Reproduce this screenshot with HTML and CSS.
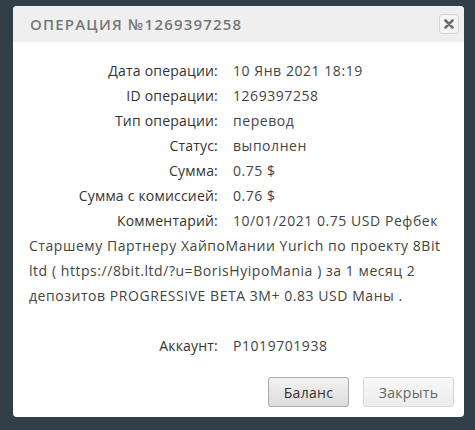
FILE: index.html
```html
<!DOCTYPE html>
<html lang="ru">
<head>
<meta charset="utf-8">
<link rel="stylesheet" href="styles.css">
</head>
<body>
<div class="dialog">
  <div class="header">
    <span class="title">Операция №1269397258</span>
    <button class="close" aria-label="close">
      <svg width="10" height="10" viewBox="0 0 10 10"><path d="M1.5 1.5 L8.5 8.5 M8.5 1.5 L1.5 8.5" stroke="#6e6e6e" stroke-width="2.6" stroke-linecap="round"/></svg>
    </button>
  </div>
  <div class="body">
    <p class="row"><span class="label">Дата операции:</span>10 Янв 2021 18:19</p>
    <p class="row"><span class="label">ID операции:</span>1269397258</p>
    <p class="row"><span class="label">Тип операции:</span>перевод</p>
    <p class="row"><span class="label">Статус:</span>выполнен</p>
    <p class="row"><span class="label">Сумма:</span>0.75 $</p>
    <p class="row"><span class="label">Сумма с комиссией:</span>0.76 $</p>
    <p class="row"><span class="label">Комментарий:</span>10/01/2021 0.75 USD Рефбек Старшему Партнеру ХайпоМании Yurich по проекту 8Bit ltd ( https://8bit.ltd/?u=BorisHyipoMania ) за 1 месяц 2 депозитов PROGRESSIVE BETA 3M+ 0.83 USD Маны .</p>
    <p class="row blank">&nbsp;</p>
    <p class="row"><span class="label">Аккаунт:</span>P1019701938</p>
  </div>
  <div class="footer">
    <button class="btn btn-primary">Баланс</button>
    <button class="btn btn-light">Закрыть</button>
  </div>
</div>
</body>
</html>
```
FILE: styles.css
```css
html, body {
  margin: 0;
  height: 100%;
}
body {
  background: #333f48;
  padding: 6px 11px 0 13px;
  box-sizing: border-box;
  font-family: "Open Sans", "Liberation Sans", sans-serif;
}
.dialog {
  width: 451px;
  background: #fff;
  border-radius: 4px;
  overflow: hidden;
}
.header {
  height: 36px;
  background: #efefef;
  display: flex;
  align-items: center;
  justify-content: space-between;
  padding: 0 5px 0 17px;
}
.title {
  text-transform: uppercase;
  font-size: 15px;
  font-weight: 600;
  letter-spacing: 1.2px;
  color: #777;
}
.close {
  width: 20px;
  height: 20px;
  padding: 0;
  border: 1px solid #d4d4d4;
  border-radius: 3px;
  background: #f4f4f4;
  display: flex;
  align-items: center;
  justify-content: center;
}
.body {
  padding: 16px 16px 0 16px;
  color: #444;
  font-size: 14px;
  letter-spacing: 0.55px;
}
.row {
  margin: 0;
  line-height: 25px;
}
.label {
  display: inline-block;
  width: 189px;
  margin-right: 15px;
  text-align: right;
  color: #333;
  font-weight: 500;
  letter-spacing: 0.2px;
}
.footer {
  display: flex;
  justify-content: flex-end;
  gap: 14px;
  padding: 19px 10px 10px;
}
.btn {
  height: 30px;
  border-radius: 3px;
  font-family: inherit;
  font-size: 14px;
  padding: 0;
  letter-spacing: 0.3px;
}
.btn-primary {
  width: 81px;
  border: 1px solid #a9a9a9;
  background: linear-gradient(#f2f2f2, #dcdcdc);
  color: #333;
}
.btn-light {
  width: 91px;
  border: 1px solid #dadada;
  background: linear-gradient(#f8f8f8, #ececec);
  color: #666;
}
```
